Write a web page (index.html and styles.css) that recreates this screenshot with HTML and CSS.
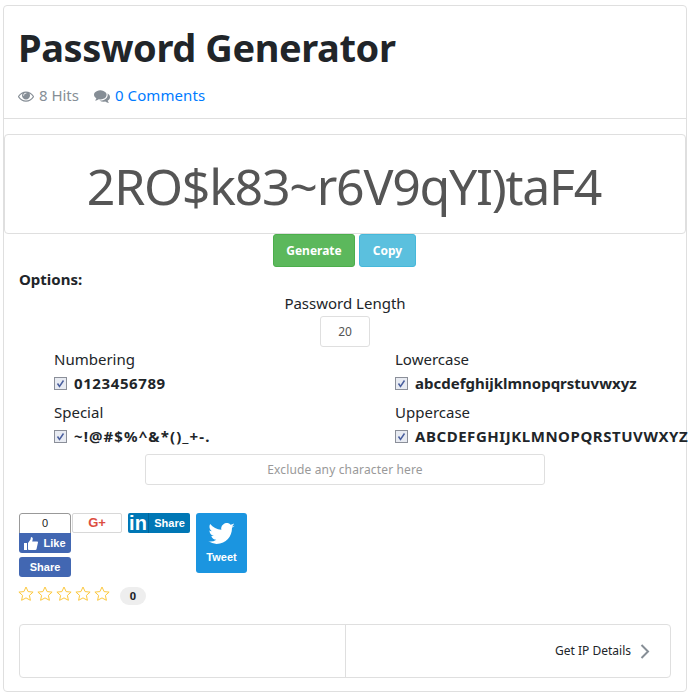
FILE: index.html
```html
<!DOCTYPE html>
<html lang="en">
<head>
    <meta charset="UTF-8">
    <meta name="viewport" content="width=device-width, initial-scale=1.0">
    <title>Password Generator</title>
    <link rel="stylesheet" href="styles.css">
</head>
<body>
    <div class="card">
        <header class="card-header">
            <h1>Password Generator</h1>
            <div class="meta">
                <span class="hits">
                    <svg class="meta-icon" viewBox="0 128 1792 1536" width="16" height="14"><path fill="#868e96" d="M1664 960q-152-236-381-353 61 104 61 225 0 185-131.500 316.500t-316.500 131.500-316.500-131.500-131.500-316.500q0-121 61-225-229 117-381 353 133 205 333.500 326.500t434.500 121.500 434.500-121.500 333.500-326.500zm-720-384q0-20-14-34t-34-14q-125 0-214.500 89.500t-89.500 214.500q0 20 14 34t34 14 34-14 14-34q0-86 61-147t147-61q20 0 34-14t14-34zm848 384q0 34-20 69-140 230-376.500 368.500t-499.500 138.500-499.500-139-376.500-368q-20-35-20-69t20-69q140-229 376.500-368t499.500-139 499.500 139 376.500 368q20 35 20 69z"/></svg>
                    8 Hits
                </span>
                <span class="comments">
                    <svg class="meta-icon" viewBox="0 128 1792 1536" width="16" height="14"><path fill="#868e96" d="M1408 768q0 139-94 257t-256.500 186.500-353.500 68.500q-86 0-176-16-124 88-278 128-36 9-86 16h-3q-11 0-20.500-8t-11.500-21q-1-3-1-6.500t.5-6.500 2-6l2.500-5 3.500-5.500 4-5 4.500-5 4-4.500q5-6 23-25t26-29.500 22.500-29 25-38.500 20.500-44q-124-72-195-177t-71-224q0-139 94-257t256.500-186.500 353.500-68.500 353.500 68.500 256.500 186.500 94 257zm384 256q0 120-71 224.500t-195 176.500q10 24 20.500 44t25 38.500 22.500 29 26 29.500 23 25q1 1 4 4.500t4.500 5 4 5 3.500 5.500l2.500 5 2 6 .5 6.500-1 6.500q-3 14-13 22t-22 7q-50-7-86-16-154-40-278-128-90 16-176 16-271 0-472-132 58 4 88 4 161 0 309-45t264-129q125-92 192-212t67-254q0-77-23-152 129 71 204 178t75 230z"/></svg>
                    <a href="#">0 Comments</a>
                </span>
            </div>
        </header>

        <div class="password-box">2RO$k83~r6V9qYI)taF4</div>

        <div class="actions">
            <button class="btn btn-generate">Generate</button>
            <button class="btn btn-copy">Copy</button>
        </div>

        <section class="options">
            <div class="options-title">Options:</div>
            <div class="length">
                <div>Password Length</div>
                <div class="length-input">20</div>
            </div>
            <div class="charsets">
                <div class="charset">
                    <div>Numbering</div>
                    <div class="charset-value charset-digits"><svg class="check" viewBox="0 0 13 13" width="13" height="13"><rect x=".5" y=".5" width="12" height="12" fill="#e8ebf2" stroke="#8b8f99"/><path d="M3.500 6.500l2 3 4-6" fill="none" stroke="#4a5f9e" stroke-width="1.500"/></svg>0123456789</div>
                </div>
                <div class="charset">
                    <div>Lowercase</div>
                    <div class="charset-value"><svg class="check" viewBox="0 0 13 13" width="13" height="13"><rect x=".5" y=".5" width="12" height="12" fill="#e8ebf2" stroke="#8b8f99"/><path d="M3.500 6.500l2 3 4-6" fill="none" stroke="#4a5f9e" stroke-width="1.500"/></svg>abcdefghijklmnopqrstuvwxyz</div>
                </div>
                <div class="charset">
                    <div>Special</div>
                    <div class="charset-value charset-special"><svg class="check" viewBox="0 0 13 13" width="13" height="13"><rect x=".5" y=".5" width="12" height="12" fill="#e8ebf2" stroke="#8b8f99"/><path d="M3.500 6.500l2 3 4-6" fill="none" stroke="#4a5f9e" stroke-width="1.500"/></svg>~!@#$%^&amp;*()_+-.</div>
                </div>
                <div class="charset">
                    <div>Uppercase</div>
                    <div class="charset-value charset-upper"><svg class="check" viewBox="0 0 13 13" width="13" height="13"><rect x=".5" y=".5" width="12" height="12" fill="#e8ebf2" stroke="#8b8f99"/><path d="M3.500 6.500l2 3 4-6" fill="none" stroke="#4a5f9e" stroke-width="1.500"/></svg>ABCDEFGHIJKLMNOPQRSTUVWXYZ</div>
                </div>
            </div>
            <div class="exclude">Exclude any character here</div>
        </section>

        <section class="social">
            <div class="fb-col">
                <div class="fb-like">
                    <div class="fb-count">0</div>
                    <div class="fb-button">
                        <svg viewBox="0 0 14 13" width="14" height="13"><path fill="#fff" d="M0 6h3v7H0zM4 6l2.500-3.500L7 0c1.300 0 2 1 1.700 2.500L8.200 4.500H13c1 0 1.200 1 .8 1.700l-1.300 6c-.2.600-.6.800-1.200.8H6c-.8 0-1.400-.3-2-.6z"/></svg>
                        Like
                    </div>
                </div>
                <div class="fb-share">Share</div>
            </div>
            <div class="gplus"><span class="gplus-mark">G+</span></div>
            <div class="linkedin">
                <span class="linkedin-mark">in</span>
                <span class="linkedin-text">Share</span>
            </div>
            <div class="tweet">
                <svg viewBox="0 0 24 20" width="27" height="22"><path fill="#fff" d="M24 2.400c-.9.400-1.800.7-2.800.8 1-.6 1.800-1.600 2.200-2.700-1 .6-2 1-3.100 1.200A4.900 4.900 0 0 0 11.900 6.200C7.800 6 4.200 4 1.700.9c-1.300 2.200-.6 5.100 1.500 6.500-.8 0-1.600-.2-2.200-.6 0 2.300 1.600 4.400 3.900 4.900-.7.200-1.500.2-2.200.1.600 2 2.400 3.400 4.600 3.400A9.900 9.900 0 0 1 0 16.700 14 14 0 0 0 7.500 19c9.100 0 14.300-7.700 14-14.600 1-.7 1.800-1.500 2.500-2z"/></svg>
                <span class="tweet-label">Tweet</span>
            </div>
        </section>

        <div class="rating">
            <div class="stars">
                <svg class="star" viewBox="0 0 16 16" width="16" height="16"><path fill="#fff" stroke="#fcc83f" d="M8 1l2.100 4.600 5 .5-3.700 3.300 1 4.900L8 11.900l-4.400 2.400 1-4.900L.9 6.100l5-.5z"/></svg>
                <svg class="star" viewBox="0 0 16 16" width="16" height="16"><path fill="#fff" stroke="#fcc83f" d="M8 1l2.100 4.600 5 .5-3.700 3.300 1 4.900L8 11.900l-4.400 2.400 1-4.900L.9 6.100l5-.5z"/></svg>
                <svg class="star" viewBox="0 0 16 16" width="16" height="16"><path fill="#fff" stroke="#fcc83f" d="M8 1l2.100 4.600 5 .5-3.700 3.300 1 4.900L8 11.900l-4.400 2.400 1-4.900L.9 6.100l5-.5z"/></svg>
                <svg class="star" viewBox="0 0 16 16" width="16" height="16"><path fill="#fff" stroke="#fcc83f" d="M8 1l2.100 4.600 5 .5-3.700 3.300 1 4.900L8 11.900l-4.400 2.400 1-4.900L.9 6.100l5-.5z"/></svg>
                <svg class="star" viewBox="0 0 16 16" width="16" height="16"><path fill="#fff" stroke="#fcc83f" d="M8 1l2.100 4.600 5 .5-3.700 3.300 1 4.900L8 11.900l-4.400 2.400 1-4.900L.9 6.100l5-.5z"/></svg>
            </div>
            <span class="rating-count">0</span>
        </div>

        <nav class="pager">
            <div class="pager-cell"></div>
            <div class="pager-cell pager-next">
                Get IP Details
                <svg viewBox="0 0 10 15" width="10" height="15"><path d="M1.500 1l6.500 6.500L1.500 14" fill="none" stroke="#868e96" stroke-width="2"/></svg>
            </div>
        </nav>
    </div>
</body>
</html>
```

FILE: styles.css
```css
body {
    font-family: "Noto Sans", Arial, sans-serif;
    font-size: 15px;
    line-height: 24px;
    color: #212529;
    margin: 0;
    padding: 5px 3px 0;
    overflow: hidden;
}

.card {
    width: 684px;
    height: 687px;
    box-sizing: border-box;
    border: 1px solid #dfdfdf;
    border-radius: 4px;
    background-color: white;
}

/* Titre */
.card-header {
    height: 113px;
    box-sizing: border-box;
    padding: 17px 14px 0;
    border-bottom: 1px solid #dfdfdf;
}

h1 {
    margin: 0;
    font-size: 38px;
    line-height: 48px;
    font-weight: 700;
    letter-spacing: -0.4px;
}

.meta {
    display: flex;
    gap: 15px;
    margin-top: 12px;
    color: #868e96;
}

.meta-icon {
    margin-right: 1px;
    vertical-align: -2px;
}

.meta a {
    color: #007bff;
    text-decoration: none;
    letter-spacing: 0.1px;
}

/* Mot de passe */
.password-box {
    height: 100px;
    box-sizing: border-box;
    margin: 15px 0 0 0;
    padding-right: 2px;
    border: 1px solid #dfdfdf;
    border-radius: 4px;
    text-align: center;
    font-size: 50px;
    line-height: 102px;
    letter-spacing: -1.25px;
    color: #555;
}

.actions {
    display: flex;
    justify-content: center;
    gap: 4px;
    padding-right: 1px;
}

.btn {
    height: 33px;
    border: 1px solid transparent;
    border-radius: 3px;
    color: white;
    font-family: inherit;
    font-size: 12px;
    font-weight: 700;
    padding: 0;
}

.btn-generate {
    width: 82px;
    background-color: #5cb85c;
    border-color: #4cae4c;
}

.btn-copy {
    width: 57px;
    background-color: #5bc0de;
    border-color: #46b8da;
}

/* Options */
.options {
    padding: 0 15px;
}

.options-title {
    font-weight: 700;
    height: 24px;
}

.length {
    text-align: center;
}

.length-input {
    width: 50px;
    height: 31px;
    box-sizing: border-box;
    margin: 1px auto 0;
    border: 1px solid #dfdfdf;
    border-radius: 3px;
    font-size: 12px;
    line-height: 29px;
    color: #555;
}

.charsets {
    display: grid;
    grid-template-columns: 341px 1fr;
    margin-left: 35px;
    row-gap: 5px;
}

.charset-value {
    display: flex;
    align-items: center;
    gap: 7px;
    font-weight: 700;
    white-space: nowrap;
}

.charset-digits {
    letter-spacing: 0.6px;
}

.charset-special {
    letter-spacing: 1.1px;
}

.charset-upper {
    letter-spacing: 0.55px;
}

.exclude {
    width: 400px;
    height: 31px;
    box-sizing: border-box;
    margin: 6px auto 0;
    border: 1px solid #dfdfdf;
    border-radius: 3px;
    text-align: center;
    font-size: 12px;
    line-height: 29px;
    letter-spacing: 0.15px;
    color: #999;
}

/* Partage */
.social {
    display: flex;
    align-items: flex-start;
    margin: 28px 0 0 15px;
    font-family: "Liberation Sans", Arial, sans-serif;
    font-size: 11px;
    font-weight: 700;
    color: white;
    line-height: 20px;
}

.fb-col {
    width: 52px;
}

.fb-like {
    height: 40px;
    border-radius: 3px;
    overflow: hidden;
}

.fb-count {
    height: 20px;
    box-sizing: border-box;
    border: 1px solid #999;
    border-bottom: none;
    border-radius: 3px 3px 0 0;
    text-align: center;
    font-weight: 400;
    line-height: 19px;
    color: #222;
}

.fb-button {
    display: flex;
    align-items: center;
    justify-content: center;
    gap: 5px;
    height: 20px;
    background-color: #4267b2;
}

.fb-share {
    height: 20px;
    margin-top: 4px;
    border-radius: 3px;
    background-color: #4267b2;
    text-align: center;
}

.gplus {
    width: 50px;
    height: 20px;
    box-sizing: border-box;
    margin-left: 1px;
    border: 1px solid #d8d8d8;
    border-radius: 2px;
    text-align: center;
    line-height: 18px;
}

.gplus-mark {
    color: #dc4e41;
    font-size: 13px;
}

.linkedin {
    display: flex;
    width: 62px;
    height: 20px;
    margin-left: 6px;
    border-radius: 2px;
    background-color: #0077b5;
}

.linkedin-mark {
    width: 20px;
    border-right: 1px solid #00659a;
    text-align: center;
    font-size: 20px;
    line-height: 20px;
}

.linkedin-text {
    flex: 1;
    text-align: center;
}

.tweet {
    display: flex;
    flex-direction: column;
    align-items: center;
    width: 51px;
    height: 60px;
    box-sizing: border-box;
    margin-left: 6px;
    padding-top: 10px;
    border-radius: 3px;
    background-color: #1b95e0;
}

.tweet-label {
    margin-top: 2px;
}

/* Notes */
.rating {
    display: flex;
    align-items: center;
    margin: 7px 0 0 14px;
    height: 20px;
}

.stars {
    display: flex;
    gap: 3px;
}

.rating-count {
    width: 26px;
    height: 18px;
    margin: 4px 0 0 10px;
    border-radius: 9px;
    background-color: #eee;
    text-align: center;
    font-size: 11px;
    font-weight: 700;
    line-height: 18px;
}

/* Pied */
.pager {
    display: grid;
    grid-template-columns: 325px 1fr;
    height: 52px;
    margin: 20px 15px 0;
    border: 1px solid #dfdfdf;
    border-radius: 4px;
    font-size: 12px;
}

.pager-next {
    display: flex;
    align-items: center;
    justify-content: flex-end;
    gap: 9px;
    padding-right: 20px;
    border-left: 1px solid #dfdfdf;
}
```
